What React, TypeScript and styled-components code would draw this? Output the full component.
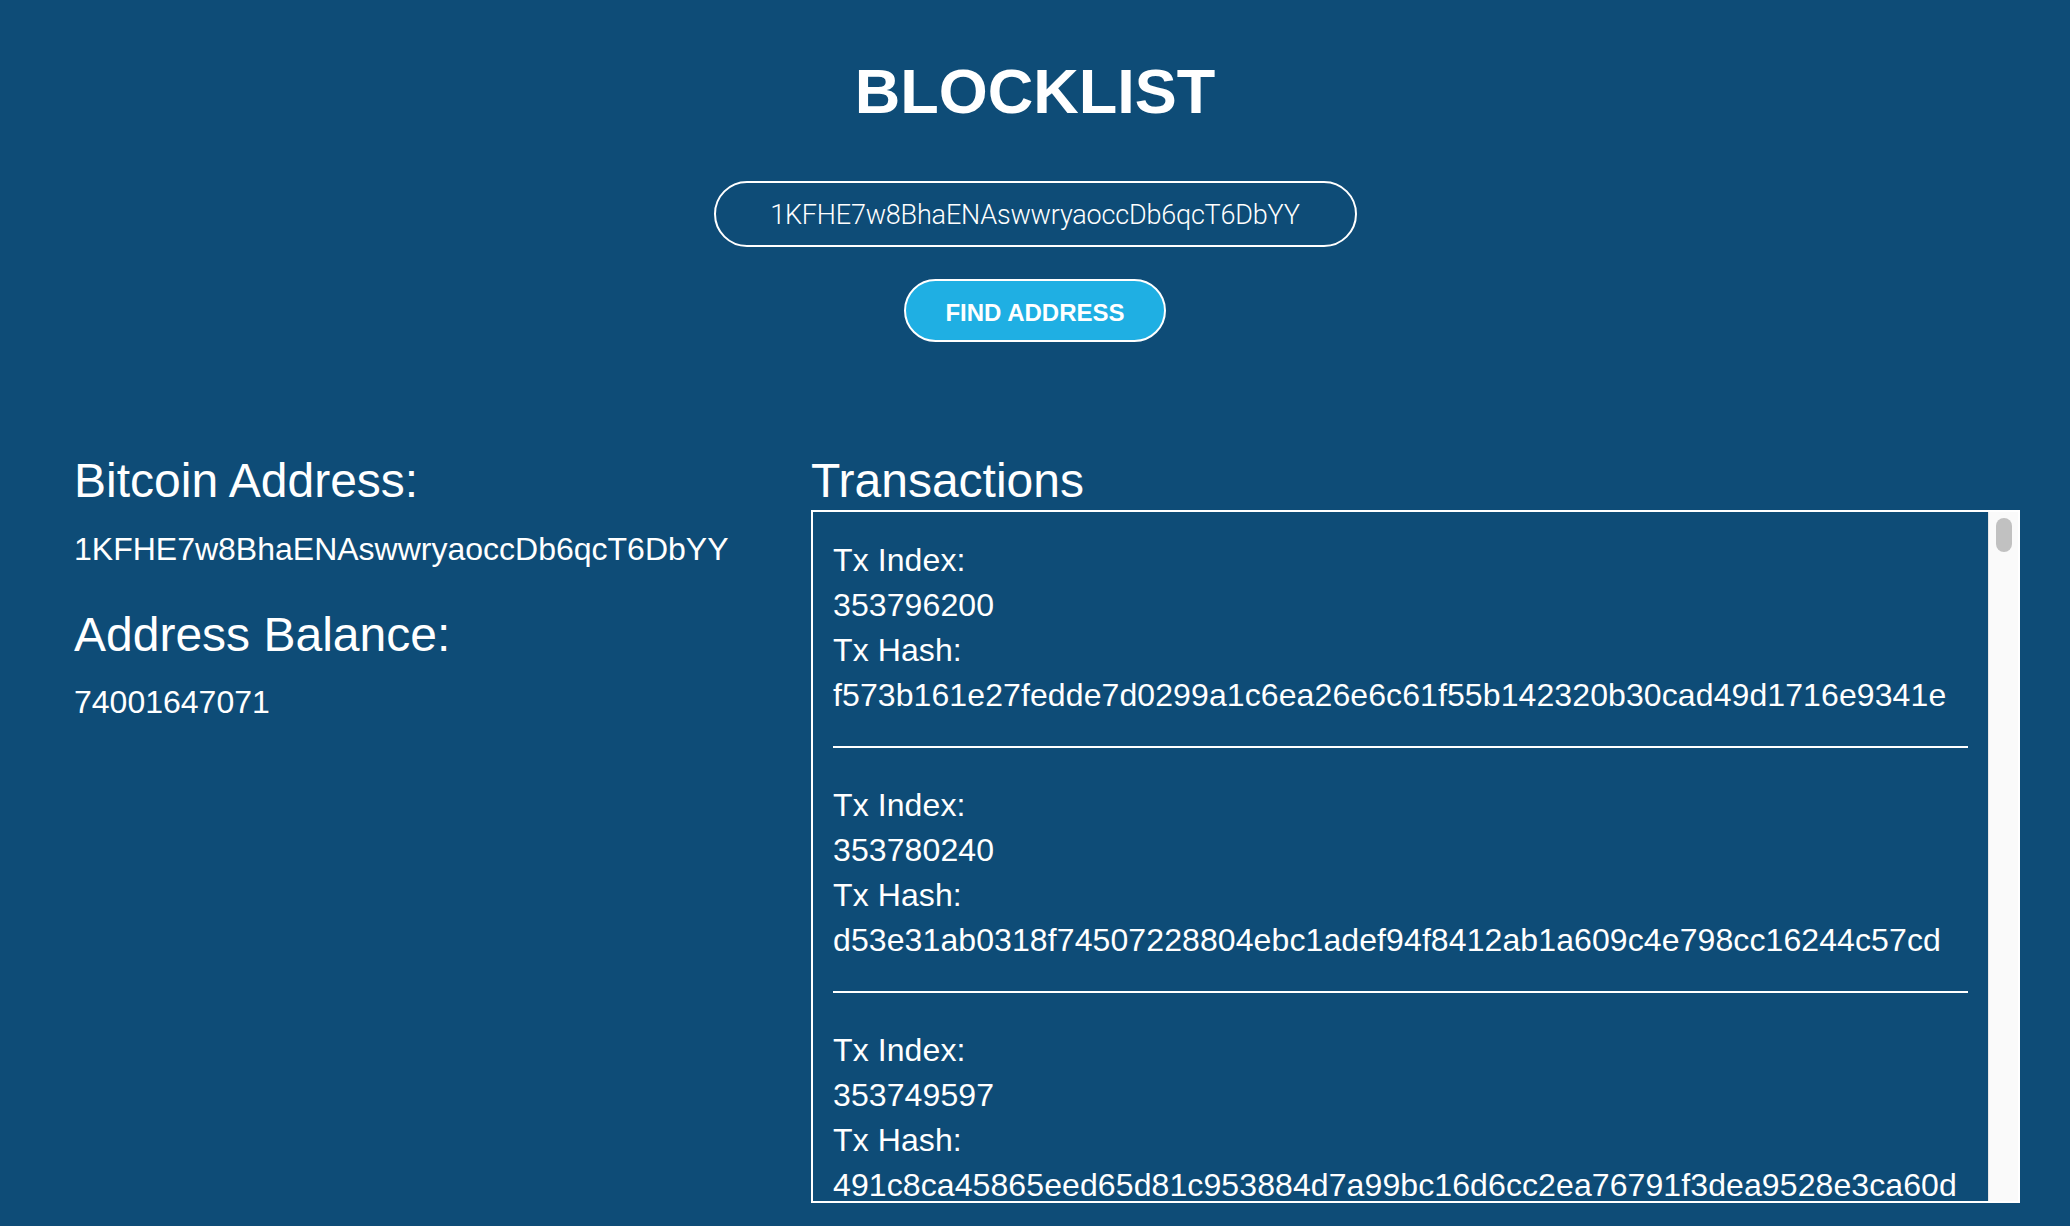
import React from "react";
import styled, { createGlobalStyle } from "styled-components";

const APP_COLOR = {
  navy: "#0e4c77",
  sky: "#1fafe3",
  white: "#ffffff",
  track: "#fafafa",
  trackEdge: "#e6e6e6",
  thumb: "#c1c1c1",
};

const GlobalStyle = createGlobalStyle`
  html, body {
    margin: 0;
    padding: 0;
    background-color: ${APP_COLOR.navy};
    color: ${APP_COLOR.white};
    font-family: "Liberation Sans", Arial, Helvetica, sans-serif;
  }
  * {
    box-sizing: border-box;
  }
`;

const StyledPage = styled.main`
  padding-top: 55px;
  min-height: 100vh;
`;

const StyledTitle = styled.h1`
  margin: 0;
  text-align: center;
  font-size: 63px;
  line-height: 72px;
  font-weight: 700;
`;

const StyledSearchForm = styled.form`
  display: flex;
  flex-direction: column;
  align-items: center;
  gap: 32px;
  margin-top: 54px;
`;

const StyledAddressInput = styled.input`
  width: 643px;
  height: 66px;
  border: 2px solid ${APP_COLOR.white};
  border-radius: 33px;
  background: transparent;
  color: ${APP_COLOR.white};
  font-family: Roboto, "Liberation Sans", sans-serif;
  font-weight: 300;
  font-size: 27px;
  letter-spacing: -0.2px;
  text-align: center;
  outline: none;
  padding: 2px 20px 0;
`;

const StyledFindButton = styled.button`
  width: 262px;
  height: 63px;
  border: 2px solid ${APP_COLOR.white};
  border-radius: 32px;
  background-color: ${APP_COLOR.sky};
  color: ${APP_COLOR.white};
  font-family: "Liberation Sans", Arial, sans-serif;
  font-weight: 700;
  font-size: 24px;
  padding: 4px 0 0;
  cursor: pointer;
`;

const StyledResults = styled.section`
  display: flex;
  margin-top: 111px;
  padding: 0 50px 0 74px;
`;

const StyledAddressColumn = styled.div`
  flex: 0 0 737px;
`;

const StyledTxColumn = styled.div`
  flex: 1;
  min-width: 0;
`;

const StyledHeading = styled.h2<{ $gap?: number }>`
  margin: ${(p) => p.$gap || 0}px 0 0;
  font-size: 48px;
  line-height: 56px;
  font-weight: 400;
`;

const StyledValue = styled.p<{ $gap: number }>`
  margin: ${(p) => p.$gap}px 0 0;
  font-size: 32px;
  line-height: 40px;
`;

const StyledTxFrame = styled.div`
  display: flex;
  margin-top: 1px;
  height: 693px;
  border: 2px solid ${APP_COLOR.white};
`;

const StyledTxList = styled.div`
  flex: 1;
  min-width: 0;
  padding: 26px 20px 0;
  overflow-x: hidden;
  overflow-y: auto;
  scrollbar-width: none;
`;

const StyledScrollTrack = styled.div`
  flex: 0 0 30px;
  background-color: ${APP_COLOR.track};
  border-left: 1px solid ${APP_COLOR.trackEdge};
  padding: 6px 6px 0 7px;
`;

const StyledScrollThumb = styled.div`
  height: 34px;
  border-radius: 8px;
  background-color: ${APP_COLOR.thumb};
`;

const StyledTx = styled.article`
  font-size: 32px;
  line-height: 45px;
  letter-spacing: 0.1px;

  p {
    margin: 0;
    white-space: nowrap;
  }
`;

const StyledDivider = styled.hr`
  border: 0;
  height: 2px;
  background-color: ${APP_COLOR.white};
  margin: 28px 0 35px;
`;

type Tx = { index: number; hash: string };

const txs: Tx[] = [
  {
    index: 353796200,
    hash: "f573b161e27fedde7d0299a1c6ea26e6c61f55b142320b30cad49d1716e9341e",
  },
  {
    index: 353780240,
    hash: "d53e31ab0318f74507228804ebc1adef94f8412ab1a609c4e798cc16244c57cd",
  },
  {
    index: 353749597,
    hash: "491c8ca45865eed65d81c953884d7a99bc16d6cc2ea76791f3dea9528e3ca60d",
  },
];

const App = () => {
  const [address, setAddress] = React.useState(
    "1KFHE7w8BhaENAswwryaoccDb6qcT6DbYY"
  );

  const handleSubmit = (e: React.SyntheticEvent) => {
    e.preventDefault();
  };

  return (
    <>
      <GlobalStyle />
      <StyledPage>
        <StyledTitle>BLOCKLIST</StyledTitle>
        <StyledSearchForm onSubmit={handleSubmit}>
          <StyledAddressInput
            name="address"
            value={address}
            onChange={(e) => setAddress(e.target.value)}
          />
          <StyledFindButton type="submit">FIND ADDRESS</StyledFindButton>
        </StyledSearchForm>

        <StyledResults>
          <StyledAddressColumn>
            <StyledHeading>Bitcoin Address:</StyledHeading>
            <StyledValue $gap={20}>1KFHE7w8BhaENAswwryaoccDb6qcT6DbYY</StyledValue>
            <StyledHeading $gap={38}>Address Balance:</StyledHeading>
            <StyledValue $gap={19}>74001647071</StyledValue>
          </StyledAddressColumn>

          <StyledTxColumn>
            <StyledHeading>Transactions</StyledHeading>
            <StyledTxFrame>
              <StyledTxList>
                {txs.map((tx) => (
                  <StyledTx key={tx.hash}>
                    <p>Tx Index:</p>
                    <p>{tx.index}</p>
                    <p>Tx Hash:</p>
                    <p>{tx.hash}</p>
                    <StyledDivider />
                  </StyledTx>
                ))}
              </StyledTxList>
              {/* browser scrollbars are hidden in the shot, so draw the track */}
              <StyledScrollTrack>
                <StyledScrollThumb />
              </StyledScrollTrack>
            </StyledTxFrame>
          </StyledTxColumn>
        </StyledResults>
      </StyledPage>
    </>
  );
};

export default App;
